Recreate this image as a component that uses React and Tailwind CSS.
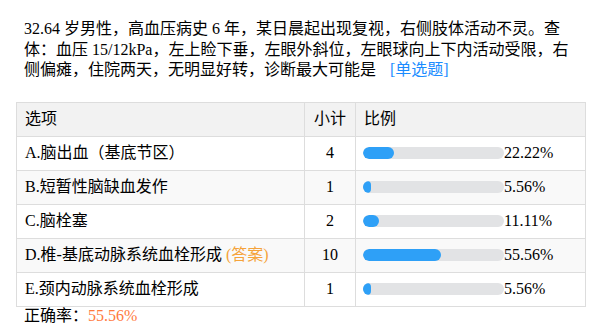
import React from "react";

const rows = [
  { label: "A.脑出血（基底节区）", n: 4, p: 22.22 },
  { label: "B.短暂性脑缺血发作", n: 1, p: 5.56 },
  { label: "C.脑栓塞", n: 2, p: 11.11 },
  { label: "D.椎-基底动脉系统血栓形成", n: 10, p: 55.56, answer: true },
  { label: "E.颈内动脉系统血栓形成", n: 1, p: 5.56 },
];

export default function App() {
  return (
    <div
      className="w-[599px] h-[335px] bg-white text-black overflow-hidden"
      style={{ fontFamily: '"Liberation Serif", "Noto Sans CJK SC", serif' }}
    >
      <div className="pl-[24px] pr-[21px] pt-[19px] text-[16px] leading-[20.5px]">
        32.64 岁男性，高血压病史 6 年，某日晨起出现复视，右侧肢体活动不灵。查体：血压 15/12kPa，左上睑下垂，左眼外斜位，左眼球向上下内活动受限，右侧偏瘫，住院两天，无明显好转，诊断最大可能是
        <span className="inline-block align-top ml-[14px] text-[#1a8cff] leading-[20.5px]">[单选题]</span>
      </div>
      <table className="ml-[16px] mt-[21px] w-[570px] border-collapse text-[16px] leading-[20px]">
        <thead>
          <tr className="bg-[#f2f2f2] h-[34px]">
            <th className="border border-[#dddddd] w-[288px] px-[8px] text-left font-normal">选项</th>
            <th className="border border-[#dddddd] w-[51px] text-center font-normal">小计</th>
            <th className="border border-[#dddddd] px-[8px] text-left font-normal">比例</th>
          </tr>
        </thead>
        <tbody>
          {rows.map((r, i) => (
            <tr key={i} className={i % 2 === 1 ? "bg-[#f9f9f9] h-[34px]" : "bg-white h-[34px]"}>
              <td className="border border-[#dddddd] px-[8px]">
                {r.label}
                {r.answer && <span className="text-[#f5a33a]"> (答案)</span>}
              </td>
              <td className="border border-[#dddddd] text-center">{r.n}</td>
              <td className="border border-[#dddddd] pl-[7px]">
                <div className="flex items-center">
                  <div className="w-[141px] h-[12px] rounded-full bg-[#e2e3e5] overflow-hidden">
                    <div className="h-full rounded-full bg-[#2ea0f7]" style={{ width: `${r.p}%` }} />
                  </div>
                  <span>{r.p.toFixed(2)}%</span>
                </div>
              </td>
            </tr>
          ))}
        </tbody>
      </table>
      <div className="pl-[24px] text-[16px] leading-[20px] -mt-[1px]">
        正确率：<span className="text-[#ff7a3d]">55.56%</span>
      </div>
    </div>
  );
}
